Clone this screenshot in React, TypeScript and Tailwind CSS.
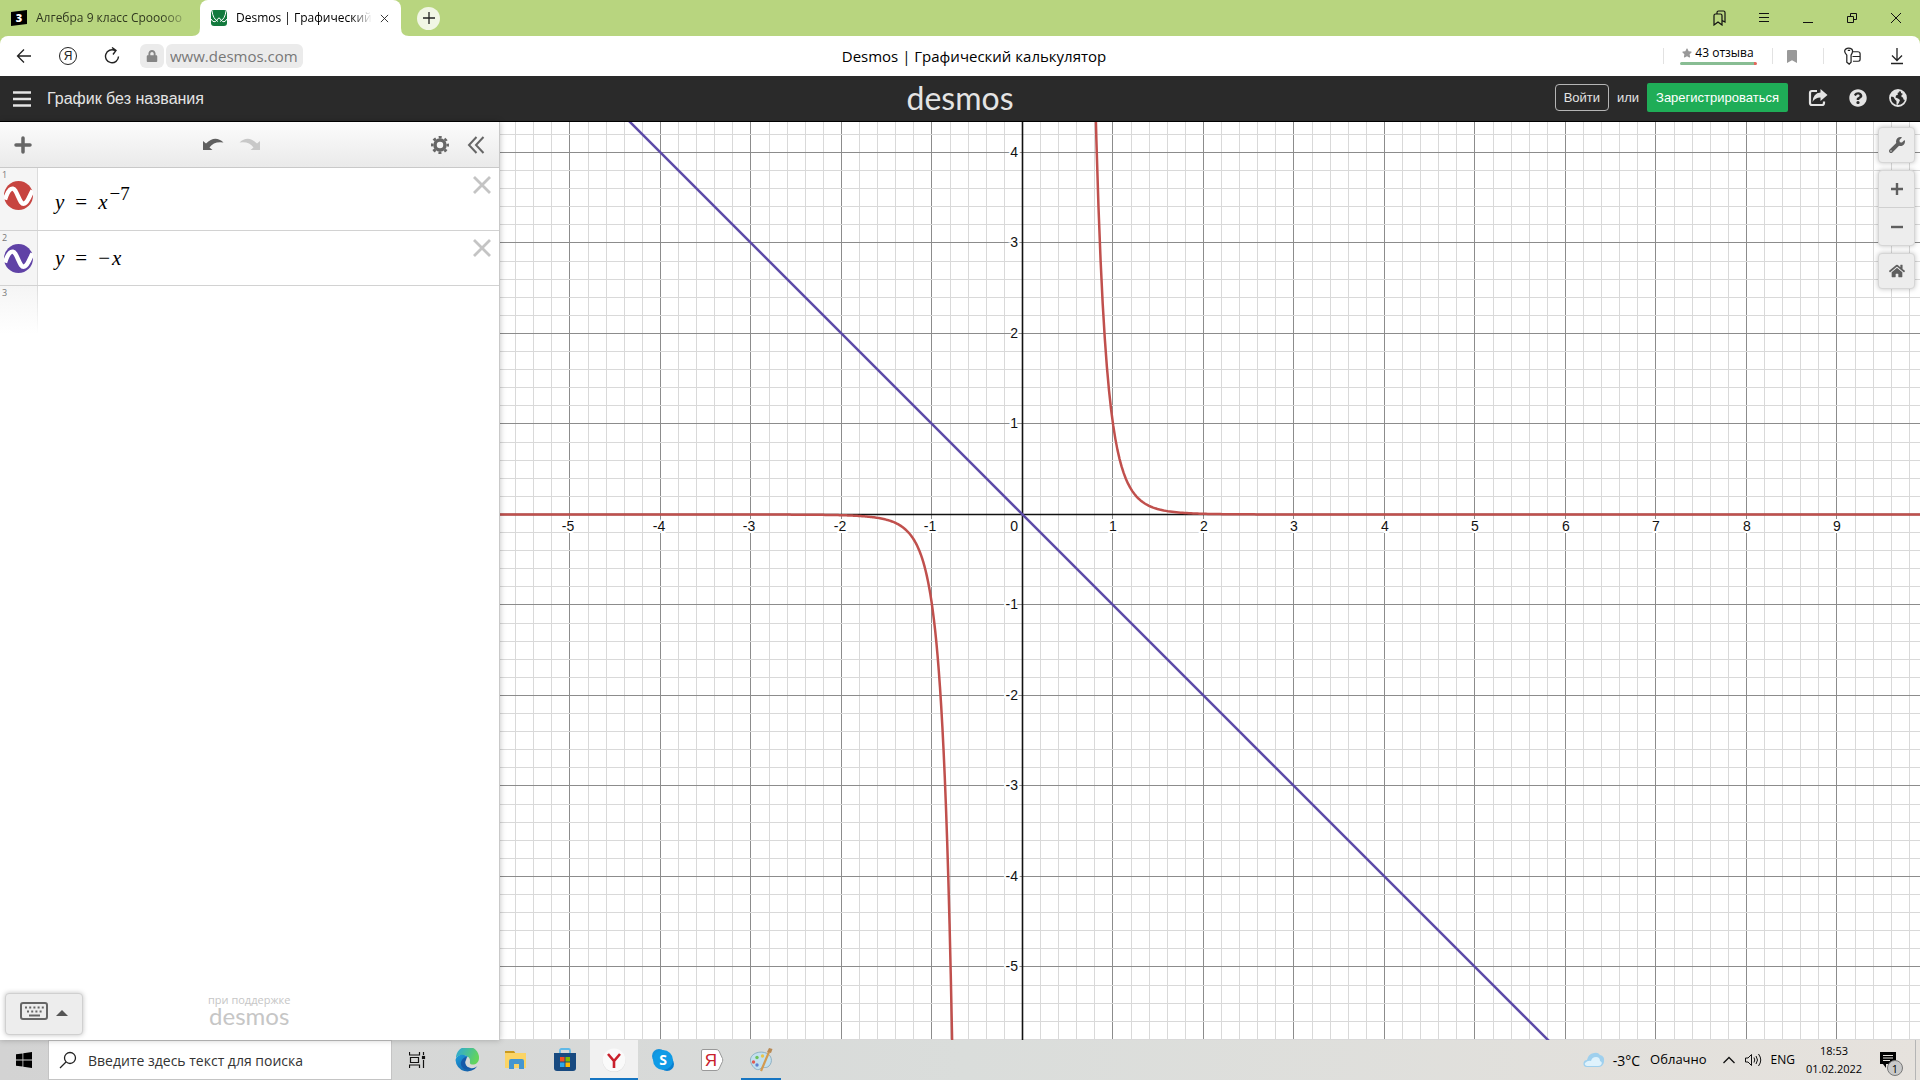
import React from 'react';
import { FaHome, FaWrench, FaQuestionCircle, FaStar, FaBookmark, FaLock } from 'react-icons/fa';

const UNIT = 90.5;
const WIDTH = 1420;
const HEIGHT = 918;
const ORIGIN_X = 522.5;
const ORIGIN_Y = 392.5;

interface Expression { id: number; color: string; body: React.ReactNode; rowClass: string; }

const expressions: Expression[] = [
  { id: 1, color: '#c74440', body: <>y<Op>=</Op>x<sup className="relative -top-[9px] ml-[2px] text-[19px] leading-none not-italic align-baseline">−7</sup></>, rowClass: 'h-[62px] pt-[6px]' },
  { id: 2, color: '#6042a6', body: <>y<Op>=</Op><span className="mr-[2px] not-italic">−</span>x</>, rowClass: 'h-[54px]' },
];

function Op({ children }: { children: React.ReactNode }) {
  return <span className="mx-[11px] not-italic">{children}</span>;
}

// centre 1px lines on whole device pixels
function snap(v: number) {
  return Math.ceil(v) - 0.5;
}

function curvePath(from: number, to: number) {
  const points: string[] = [];
  const steps = 400;
  for (let i = 0; i <= steps; i++) {
    const x = from + ((to - from) * i) / steps;
    const y = Math.pow(x, -7);
    points.push(`${(ORIGIN_X + x * UNIT).toFixed(2)},${(ORIGIN_Y - y * UNIT).toFixed(2)}`);
  }
  return 'M' + points.join('L');
}

function Graph() {
  const cols = Array.from({ length: 80 }, (_, i) => i - 28).filter(i => ORIGIN_X + (i * UNIT) / 5 < WIDTH);
  const rows = Array.from({ length: 60 }, (_, i) => i - 21).filter(i => ORIGIN_Y + (i * UNIT) / 5 < HEIGHT);
  const label = 'fill-[#111] stroke-white font-["Liberation_Sans",sans-serif] text-[14px]';

  return (
    <svg viewBox={`0 0 ${WIDTH} ${HEIGHT}`} preserveAspectRatio="xMidYMid slice" className="block h-full w-full bg-white" role="img" aria-label="График">
      {cols.map(i => {
        const x = snap(ORIGIN_X + (i * UNIT) / 5);
        return <line key={i} x1={x} x2={x} y1={0} y2={HEIGHT} stroke={i % 5 === 0 ? '#8c8c8c' : '#d9d9d9'} />;
      })}
      {rows.map(i => {
        const y = snap(ORIGIN_Y + (i * UNIT) / 5);
        return <line key={i} x1={0} x2={WIDTH} y1={y} y2={y} stroke={i % 5 === 0 ? '#8c8c8c' : '#d9d9d9'} />;
      })}
      <line x1={0} x2={WIDTH} y1={ORIGIN_Y} y2={ORIGIN_Y} stroke="#111" strokeWidth={1.6} />
      <line x1={ORIGIN_X} x2={ORIGIN_X} y1={0} y2={HEIGHT} stroke="#111" strokeWidth={1.6} />
      {cols.filter(i => i % 5 === 0 && i !== 0).map(i => (
        <text key={i} x={Math.round(ORIGIN_X + (i / 5) * UNIT) - (i < 0 ? 2 : 0)} y={409} textAnchor="middle" strokeWidth={4} paintOrder="stroke" className={label}>{i / 5}</text>
      ))}
      {rows.filter(i => i % 5 === 0 && i !== 0).map(i => (
        <text key={i} x={518} y={Math.round(ORIGIN_Y + (i / 5) * UNIT) + 4} textAnchor="end" strokeWidth={4} paintOrder="stroke" className={label}>{-i / 5}</text>
      ))}
      <text x={518} y={409} textAnchor="end" strokeWidth={4} paintOrder="stroke" className={label}>0</text>
      <g fill="none" strokeWidth={2.5} strokeLinejoin="round">
        <path d={curvePath(-6, -0.7)} stroke="#c0504d" />
        <path d={curvePath(0.7, 10)} stroke="#c0504d" />
        <path d={`M${ORIGIN_X - 6 * UNIT} ${ORIGIN_Y - 6 * UNIT}L${ORIGIN_X + 7 * UNIT} ${ORIGIN_Y + 7 * UNIT}`} stroke="#5c4aa8" />
      </g>
    </svg>
  );
}

function TabBar() {
  return (
    <div className="flex h-9 items-stretch bg-[#b8d57f] text-black">
      <a href="#algebra" className="flex w-[200px] items-center gap-[9px] rounded-br-lg pl-[11px] text-[#30381f]">
        <svg viewBox="0 0 16 16" className="size-4 shrink-0">
          <path d="M0 2L16 0V14L0 16Z" fill="#000" />
          <text x="8" y="12" textAnchor="middle" fill="#fff" className="font-['Open_Sans',sans-serif] text-[11px] font-extrabold">3</text>
        </svg>
        <span className="w-[156px] whitespace-nowrap text-[12px] [mask-image:linear-gradient(to_right,#000_80%,transparent)]">Алгебра 9 класс Срооооо</span>
      </a>
      <div className="relative flex w-[201px] items-center rounded-t-lg bg-white pr-3 pl-[11px]">
        <svg viewBox="0 0 8 8" className="absolute bottom-0 -left-2 size-2"><path d="M8 0V8H0Q8 8 8 0Z" fill="#fff" /></svg>
        <svg viewBox="0 0 8 8" className="absolute -right-2 bottom-0 size-2"><path d="M0 0V8H8Q0 8 0 0Z" fill="#fff" /></svg>
        <svg viewBox="0 0 16 16" className="size-4 shrink-0">
          <rect width="16" height="16" rx="3" fill="#127a3d" />
          <path d="M1 1Q2 9 7 11.500M15 1Q14 9 9 11.500M0 9Q3 14 6 10Q8 6 10 10Q13 14 16 9" stroke="#fff" strokeWidth="1" fill="none" />
        </svg>
        <a href="#desmos" className="ml-[9px] w-[136px] whitespace-nowrap text-[12px] [mask-image:linear-gradient(to_right,#000_85%,transparent)]">Desmos | Графический</a>
        <button aria-label="Закрыть вкладку" className="ml-2">
          <svg viewBox="0 0 10 10" className="size-[9px]"><path d="M1 1L9 9M9 1L1 9" stroke="#222" /></svg>
        </button>
      </div>
      <button aria-label="Новая вкладка" className="ml-4 flex size-[23px] items-center justify-center self-center rounded-full bg-[#f1f6e5]">
        <svg viewBox="0 0 12 12" className="size-3"><path d="M6 0V12M0 6H12" stroke="#222" strokeWidth="1.3" /></svg>
      </button>
      <div className="ml-auto flex items-center gap-7 pr-4">
        <button aria-label="Закладки">
          <svg viewBox="0 0 16 16" className="size-4" fill="none" stroke="#111" strokeWidth="1.2"><path d="M2 5.500Q2 4 3.500 4H8.500Q10 4 10 5.500V15L6 12L2 15ZM5 4V2.500Q5 1 6.500 1H11.500Q13 1 13 2.500V12L10 10.500" /></svg>
        </button>
        <button aria-label="Меню">
          <svg viewBox="0 0 16 16" className="size-4" stroke="#111" strokeWidth="1"><path d="M3 3.500H13M3 7.500H13M3 11.500H13" /></svg>
        </button>
        <button aria-label="Свернуть">
          <svg viewBox="0 0 16 16" className="size-4" stroke="#111"><path d="M3 12.500H13" /></svg>
        </button>
        <button aria-label="Восстановить">
          <svg viewBox="0 0 16 16" className="size-4" fill="none" stroke="#111"><path d="M3.500 6.500H9.500V12.500H3.500ZM6.500 6.500V3.500H12.500V9.500H9.500" /></svg>
        </button>
        <button aria-label="Закрыть">
          <svg viewBox="0 0 16 16" className="size-4" stroke="#111"><path d="M3 3L13 13M13 3L3 13" /></svg>
        </button>
      </div>
    </div>
  );
}

function AddressBar() {
  return (
    <div className="bg-[#b8d57f]">
      <div className="flex h-10 items-center rounded-t-lg bg-white">
        <button aria-label="Назад" className="ml-4">
          <svg viewBox="0 0 16 16" className="size-4" fill="none" stroke="#222" strokeWidth="1.3"><path d="M15 8H1.500M8 1.500L1.500 8L8 14.500" /></svg>
        </button>
        <button aria-label="Яндекс" className="ml-[27px] flex size-[18px] items-center justify-center rounded-full border border-[#222] font-['Liberation_Sans',sans-serif] text-[12px] leading-none text-[#222]">Я</button>
        <button aria-label="Обновить" className="ml-[26px]">
          <svg viewBox="0 0 18 18" className="size-[18px]" fill="none" stroke="#222" strokeWidth="1.4"><path d="M12 3.500A6.500 6.500 0 1 0 15.500 9.500M9 0.500L13 3.500L10 7.500" /></svg>
        </button>
        <span className="ml-[19px] flex h-6 w-6 items-center justify-center rounded-md bg-[#ebebeb]"><FaLock className="size-3 text-[#858585]" /></span>
        <input aria-label="Адрес" defaultValue="www.desmos.com" className="ml-[2px] h-6 w-[137px] rounded-md bg-[#ebebeb] px-1 text-[15px] text-[#777] outline-none" />
        <h1 className="mr-[18px] flex-1 text-center text-[15px] text-black">Desmos | Графический калькулятор</h1>
        <div className="flex h-4 w-[110px] items-center justify-center border-x border-[#e2e2e2]">
          <a href="#reviews" className="flex w-[77px] flex-col pb-[3px]">
            <span className="flex items-center justify-center gap-[3px] text-[12px] leading-[18px] whitespace-nowrap"><FaStar className="size-[10px] text-[#999]" />43 отзыва</span>
            <span className="flex h-[3px] overflow-hidden rounded-full"><span className="flex-1 bg-[#88bd93]" /><span className="w-[3px] bg-[#e2685c]" /></span>
          </a>
        </div>
        <button aria-label="Добавить в закладки" className="flex w-[38px] justify-center"><FaBookmark className="h-[13px] w-[10px] text-[#999]" preserveAspectRatio="none" /></button>
        <div className="ml-[12px] h-4 w-px bg-[#e2e2e2]" />
        <button aria-label="Пароли и карты" className="ml-[19px]">
          <svg viewBox="0 0 20 20" className="size-[19px]" fill="none" stroke="#222" strokeWidth="1.3"><path d="M2.500 2.500Q6 0 9.500 2.500Q11 5 8.500 8.500V16L6.500 18L4 16V8.500Q0.500 5 2.500 2.500ZM5 3.500H7.500M10.500 5H15.500Q18 5 18 7V13Q18 15 16 15H10.500M10 10H18" /></svg>
        </button>
        <button aria-label="Загрузки" className="mr-[15px] ml-[27px]">
          <svg viewBox="0 0 16 18" className="h-[18px] w-4" fill="none" stroke="#222" strokeWidth="1.3"><path d="M8 1V13.500M3 8.500L8 13.500L13 8.500M2 16.500H14" /></svg>
        </button>
      </div>
    </div>
  );
}

function Header() {
  return (
    <header className="grid h-[46px] grid-cols-[1fr_auto_1fr] items-center border-b border-black bg-[#2a2a2a] font-['Liberation_Sans',sans-serif] text-[#e4e4e4]">
      <div className="flex items-center gap-4 pl-[13px]">
        <button aria-label="Открыть меню">
          <svg viewBox="0 0 18 16" className="h-4 w-[18px]" stroke="#e4e4e4" strokeWidth="2.500"><path d="M0 1.500H18M0 8H18M0 14.500H18" /></svg>
        </button>
        <span className="text-[16px]">График без названия</span>
      </div>
      <a href="#home" className="pb-[2px] font-['Lato',sans-serif] text-[32px] leading-[40px]">desmos</a>
      <div className="flex items-center justify-end pr-[13px] pb-[2px] text-[13px]">
        <button className="h-[27px] w-[54px] rounded border border-[#b5b5b5] text-center">Войти</button>
        <span className="mx-2">или</span>
        <button className="h-[29px] w-[141px] rounded-xs bg-[#1fad57] text-center text-white">Зарегистрироваться</button>
        <button aria-label="Поделиться" className="ml-5">
          <svg viewBox="0 0 20 18" className="h-[18px] w-5"><path d="M9 2H4Q2 2 2 4V14Q2 16 4 16H14Q16 16 16 14V12.500" fill="none" stroke="#e4e4e4" strokeWidth="2.200" /><path d="M12.500 0L19.500 6L12.500 12V8.500Q7 8.500 4.500 13Q5 4 12.500 3.500Z" fill="#e4e4e4" /></svg>
        </button>
        <button aria-label="Справка" className="ml-[21px]"><FaQuestionCircle className="size-[18px]" /></button>
        <button aria-label="Язык" className="ml-[22px]">
          <svg viewBox="0 0 18 18" className="size-[18px]">
            <circle cx="9" cy="9" r="8" fill="none" stroke="#e4e4e4" strokeWidth="1.800" />
            <path d="M2 4.500L5 1.500L9 1L10.500 3L8.500 4L9 5.500L7 6.500L6.500 8.500L9 9.500L11 11L10 13.500L8.500 16L7.500 15.500V12L6 10.500L4.500 8L2 7.500Z" fill="#e4e4e4" />
            <path d="M12 2L15.500 4.500L17 8L16 11L14.500 10.500L14 8.500L12.500 8L12.500 6L14 5L12 4Z" fill="#e4e4e4" />
          </svg>
        </button>
      </div>
    </header>
  );
}

function Sidebar() {
  return (
    <aside className="relative z-10 flex w-[500px] shrink-0 flex-col border-r border-[#c9c9c9] bg-white shadow-[0_0_6px_rgba(0,0,0,0.25)]">
      <div className="flex h-[46px] items-center border-b border-[#c9c9c9] bg-linear-to-b from-[#fcfcfc] to-[#eaeaea]">
        <button aria-label="Добавить" className="ml-[14px]">
          <svg viewBox="0 0 18 18" className="size-[18px]" stroke="#666" strokeWidth="3.500" strokeLinecap="round"><path d="M9 2V16M2 9H16" /></svg>
        </button>
        <div className="flex flex-1 justify-center gap-[15px]">
          <button aria-label="Отменить" className="pb-[2px]">
            <svg viewBox="0 0 22 12" className="h-3 w-[22px]"><path d="M1 3V12H10.500L7.500 9.500Q12 3 21.500 4.500Q13 -3.500 4 5.500Z" fill="#5f5f5f" /></svg>
          </button>
          <button aria-label="Повторить" className="pb-[2px]">
            <svg viewBox="0 0 22 12" className="h-3 w-[22px]"><path d="M21 3V12H11.500L14.500 9.500Q10 3 0.500 4.500Q9 -3.500 18 5.500Z" fill="#c8c8c8" /></svg>
          </button>
        </div>
        <button aria-label="Настройки">
          <svg viewBox="0 0 18 18" className="size-[18px]" fill="none" stroke="#666">
            <circle cx="9" cy="9" r="5" strokeWidth="3.500" />
            <circle cx="9" cy="9" r="7.800" strokeWidth="2.400" strokeDasharray="3.060 3.060" strokeDashoffset="1.530" />
          </svg>
        </button>
        <button aria-label="Скрыть список" className="mr-[14px] ml-[18px]">
          <svg viewBox="0 0 18 18" className="size-[18px]" fill="none" stroke="#666" strokeWidth="2"><path d="M9.500 1L2 9L9.500 17M16.500 1L9 9L16.500 17" /></svg>
        </button>
      </div>
      <ul>
        {expressions.map(ex => (
          <li key={ex.id} className="flex border-b border-[#d2d2d2]">
            <div className="flex w-[38px] flex-col border-r border-[#dcdcdc] bg-[#f5f5f5] pl-1">
              <span className="-ml-[2px] h-[13px] font-['Open_Sans',sans-serif] text-[9px] leading-[13px] text-[#777]">{ex.id}</span>
              <button aria-label="Показать или скрыть график" className="size-[29px]">
                <svg viewBox="0 0 29 29" className="size-[29px]">
                  <circle cx="14.500" cy="14.500" r="14.500" fill={ex.color} />
                  <path d="M1 18.500C4 9 8 4.500 11.500 10C15 16 16.500 24 20.500 22.500C24 21 25 16 28.500 9.500" fill="none" stroke="#fff" strokeWidth="4.400" />
                </svg>
              </button>
            </div>
            <div className={`flex flex-1 items-center pl-[17px] font-["Liberation_Serif",serif] text-[21px] leading-none text-black italic ${ex.rowClass}`}>
              <span>{ex.body}</span>
            </div>
            <button aria-label="Удалить" className="mt-[8px] mr-2 self-start">
              <svg viewBox="0 0 18 18" className="size-[18px]" stroke="#c4c4c4" strokeWidth="2.800"><path d="M1 1L17 17M17 1L1 17" /></svg>
            </button>
          </li>
        ))}
        <li className="flex h-12">
          <div className="w-[38px] bg-linear-to-b from-[#f5f5f5] to-white pl-[2px] font-['Open_Sans',sans-serif] text-[9px] leading-[13px] text-[#777]">3</div>
          <div className="-ml-px w-px bg-linear-to-b from-[#dcdcdc] to-white" />
        </li>
      </ul>
      <div className="mt-auto flex items-end pb-[5px] pl-[5px]">
        <button aria-label="Клавиатура" className="flex h-[42px] w-[78px] items-center gap-2 rounded border border-[#d0d0d0] bg-[#ededed] pb-[6px] pl-[14px] shadow-[0_0_5px_rgba(0,0,0,0.25)]">
          <svg viewBox="0 0 28 18" className="h-[18px] w-7" fill="none" stroke="#666" strokeWidth="2"><rect x="1" y="1" width="26" height="16" rx="2" /><path d="M5 5.500H24" strokeDasharray="2 2.200" /><path d="M7 9.500H22" strokeDasharray="2 2.200" /><path d="M9 13.500H20" /></svg>
          <svg viewBox="0 0 12 6" className="mt-1 h-[6px] w-3"><path d="M6 0L12 6H0Z" fill="#555" /></svg>
        </button>
        <div className="ml-[125px] flex flex-col items-center pb-[9px] text-[#c6c6c6]">
          <span className="text-[11px] leading-3 whitespace-nowrap">при поддержке</span>
          <span className="font-['Lato',sans-serif] text-[24px] leading-5">desmos</span>
        </div>
      </div>
    </aside>
  );
}

function GraphTools() {
  const box = 'rounded border border-[#d6d6d6] bg-[#ededed] text-[#5f5f5f] shadow-[0_0_5px_rgba(0,0,0,0.25)]';
  const cell = 'flex w-[35px] items-center justify-center';
  return (
    <div className="absolute top-[5px] right-[5px] flex flex-col gap-[7px]">
      <div className={box}><button aria-label="Настройки графика" className={`h-[34px] ${cell}`}><FaWrench className="size-4" /></button></div>
      <div className={box}>
        <button aria-label="Увеличить" className={`h-[37px] border-b border-[#d0d0d0] ${cell}`}>
          <svg viewBox="0 0 12 12" className="size-3" stroke="#5f5f5f" strokeWidth="2.400"><path d="M6 0V12M0 6H12" /></svg>
        </button>
        <button aria-label="Уменьшить" className={`h-[37px] ${cell}`}>
          <svg viewBox="0 0 12 12" className="size-3" stroke="#5f5f5f" strokeWidth="2.400"><path d="M0 6H12" /></svg>
        </button>
      </div>
      <div className={box}><button aria-label="Домой" className={`h-[34px] ${cell}`}><FaHome className="size-4" /></button></div>
    </div>
  );
}

const apps = [
  {
    name: 'Edge', className: '',
    icon: (
      <svg viewBox="0 0 24 24" className="size-6">
        <defs>
          <linearGradient id="edgeTop" x1="0" y1="0" x2="1" y2="0.400"><stop offset="0" stopColor="#2aa5e0" /><stop offset="1" stopColor="#62d45c" /></linearGradient>
          <linearGradient id="edgeLow" x1="0" y1="0" x2="1" y2="1"><stop offset="0" stopColor="#1ea0dc" /><stop offset="1" stopColor="#124f9c" /></linearGradient>
        </defs>
        <path d="M1 10A11.500 11.500 0 0 1 24 10C24 15 20 17 17 16.500C14 16 15 14 15 12C14 7 5 5 1 10Z" fill="url(#edgeTop)" />
        <path d="M0.500 12C2 5 11 6 13 9C9 9 8 18 15 20C18 21 21 19.500 22.500 18A12 12 0 0 1 0.500 12Z" fill="url(#edgeLow)" />
        <path d="M11 12C9 15 11 20 16 20C10 24 5 19 6 14C7 11 9 9 12 9Z" fill="#1559a8" />
      </svg>
    ),
  },
  {
    name: 'Проводник', className: '',
    icon: (
      <svg viewBox="0 0 24 24" className="size-6">
        <path d="M1 3H10L12 6H1Z" fill="#c99a20" />
        <path d="M1 5H22V20H1Z" fill="#fbd466" />
        <path d="M5 21V13Q5 11 7 11H18Q20 11 20 13V21H15V16H10V21Z" fill="#4596d0" />
      </svg>
    ),
  },
  {
    name: 'Магазин', className: '',
    icon: (
      <svg viewBox="0 0 24 24" className="size-6">
        <path d="M7 7V2.500Q7 1 8.500 1H15.500Q17 1 17 2.500V7" fill="none" stroke="#5fb9e8" strokeWidth="1.800" />
        <path d="M1 5H23V20Q23 23 20 23H4Q1 23 1 20Z" fill="#184a80" />
        <path d="M7 9H11.500V13.500H7Z" fill="#f25022" /><path d="M12.500 9H17V13.500H12.500Z" fill="#7fba00" />
        <path d="M7 14.500H11.500V19H7Z" fill="#2ba8ea" /><path d="M12.500 14.500H17V19H12.500Z" fill="#ffb900" />
      </svg>
    ),
  },
  {
    name: 'Яндекс Браузер', className: 'bg-[#f1f1f1] border-b-2 border-[#1675c2] pt-[2px]',
    icon: (
      <svg viewBox="0 0 24 24" className="size-6">
        <circle cx="12" cy="12.500" r="11.500" fill="#d8d8d8" /><circle cx="12" cy="12" r="11.500" fill="#fafafa" />
        <path d="M6 6L12 13L18 6M12 12.500V20" fill="none" stroke="#c9202c" strokeWidth="2.600" />
      </svg>
    ),
  },
  {
    name: 'Skype', className: '',
    icon: (
      <svg viewBox="0 0 24 24" className="size-6">
        <circle cx="8" cy="8" r="7" fill="#1493dc" /><circle cx="16" cy="16" r="7" fill="#0a7fd0" /><circle cx="12" cy="12" r="10" fill="#0f9be6" />
        <text x="12" y="17" textAnchor="middle" fill="#fff" className="font-['Open_Sans',sans-serif] text-[14px] font-bold">S</text>
      </svg>
    ),
  },
  {
    name: 'Яндекс', className: '',
    icon: (
      <svg viewBox="0 0 24 24" className="size-6">
        <path d="M3 1.500H16Q18 1.500 19 3L22.500 10.500Q23 12 22.500 13.500L19 21Q18 22.500 16 22.500H3Q1.500 22.500 1.500 21V3Q1.500 1.500 3 1.500Z" fill="#fff" stroke="#999" />
        <text x="11" y="18" textAnchor="middle" fill="#c8202c" className="font-['Liberation_Sans',sans-serif] text-[17px]">Я</text>
      </svg>
    ),
  },
  {
    name: 'Paint', className: 'after:absolute after:bottom-0 after:h-[2px] after:w-10 after:bg-[#1675c2]',
    icon: (
      <svg viewBox="0 0 24 24" className="size-6">
        <path d="M2 15C-1 7 9 2 17 5C23 7 24 14 20 18C17 21 14 18 11 21C8 23 4 20 2 15Z" fill="#c3e0ee" stroke="#7da5ba" strokeWidth="0.800" />
        <circle cx="4.500" cy="14" r="1.700" fill="#e25b50" /><circle cx="8" cy="9.500" r="1.700" fill="#6ec25b" /><circle cx="13.500" cy="8" r="1.700" fill="#e8c64d" /><circle cx="8" cy="17" r="1.700" fill="#5e80d0" />
        <path d="M20 4L12 23" stroke="#d39b50" strokeWidth="2.200" /><path d="M18 4L20 0L23.500 1L22 5Z" fill="#b98a54" />
      </svg>
    ),
  },
];

function Taskbar() {
  return (
    <footer className="flex h-10 items-stretch bg-linear-to-r from-[#d3d3d3] via-[#dadddb] to-[#e6e2dd] text-black">
      <button aria-label="Пуск" className="flex w-12 items-center justify-center">
        <svg viewBox="0 0 16 16" className="size-4"><path d="M0 2.300L6.500 1.400V7.600H0ZM7.300 1.300L16 0V7.600H7.300ZM0 8.400H6.500V14.600L0 13.700ZM7.300 8.400H16V16L7.300 14.700Z" /></svg>
      </button>
      <label className="flex w-[344px] items-center border border-[#c4c4c4] bg-white pl-[10px]">
        <svg viewBox="0 0 18 18" className="size-[18px] shrink-0" fill="none" stroke="#222" strokeWidth="1.300"><circle cx="11" cy="7" r="5.500" /><path d="M7 11L1 17" /></svg>
        <input aria-label="Поиск" placeholder="Введите здесь текст для поиска" className="ml-[11px] w-full bg-transparent text-[14px] outline-none placeholder:text-[#333]" />
      </label>
      <button aria-label="Представление задач" className="mr-px flex w-[50px] items-center justify-center">
        <svg viewBox="0 0 17 16" className="h-4 w-[17px]" fill="none" stroke="#111" strokeWidth="1.200"><path d="M0.500 0V3H10.500V0M0.500 16V13H10.500V16M1.500 5.500H9.500V10.500H1.500ZM14.500 0V3M14.500 8V16" /><rect x="13.500" y="4.500" width="2" height="2" fill="#111" /></svg>
      </button>
      <div className="flex gap-px">
        {apps.map(app => (
          <button key={app.name} aria-label={app.name} className={`relative flex w-12 items-center justify-center ${app.className}`}>{app.icon}</button>
        ))}
      </div>
      <div className="ml-auto flex items-center">
        <svg viewBox="0 0 22 16" className="h-4 w-[22px]"><path d="M4 15Q0 15 0.500 11Q1 8 4 8Q5 2 11 1Q15 0 17 3Q22 4 21 10Q20 15 15 15Z" fill="#9fd0ee" /><path d="M4 14Q1 13 2 11Q5 8 8 9Q9 5 13 5Q17 5 17 9Q20 10 18 13Q17 14 15 14Z" fill="#dff2fc" /></svg>
        <span className="ml-2 text-[14px]">-3°C</span>
        <span className="ml-[10px] text-[13px]">Облачно</span>
        <button aria-label="Скрытые значки" className="ml-4"><svg viewBox="0 0 12 8" className="h-2 w-3" fill="none" stroke="#111" strokeWidth="1.300"><path d="M0.500 7L6 1.500L11.500 7" /></svg></button>
        <button aria-label="Громкость" className="ml-[10px]">
          <svg viewBox="0 0 17 14" className="h-[14px] w-[17px]" fill="none" stroke="#111"><path d="M0.500 5H3L6.500 1.500V12.500L3 9H0.500ZM9 4.500Q10.500 7 9 9.500M11 3Q14 7 11 11M13.500 1Q18 7 13.500 13" /></svg>
        </button>
        <button className="ml-[9px] text-[12px]">ENG</button>
        <div className="ml-2 w-[62px] text-center text-[11px] leading-[18px]"><div>18:53</div><div>01.02.2022</div></div>
        <button aria-label="Уведомления" className="relative ml-[15px] h-10 w-[36px] border-r border-[#b5b5b5]">
          <svg viewBox="0 0 16 16" className="absolute top-3 left-0 size-4"><path d="M0 0H16V12H6V16L3 12H0Z" /><path d="M3 3.500H13M3 6H13M3 8.500H10" stroke="#e4e1db" /></svg>
          <span className="absolute top-5 left-[7px] flex size-4 items-center justify-center rounded-full border border-[#777] bg-[#c9c9c9] text-[11px] leading-none">1</span>
        </button>
        <div className="w-1" />
      </div>
    </footer>
  );
}

export default function App() {
  return (
    <div className="flex h-screen flex-col overflow-hidden bg-white font-['Open_Sans','Noto_Sans',sans-serif]">
      <TabBar />
      <AddressBar />
      <Header />
      <main className="flex min-h-0 flex-1">
        <Sidebar />
        <section className="relative min-w-0 flex-1">
          <Graph />
          <GraphTools />
        </section>
      </main>
      <Taskbar />
    </div>
  );
}
